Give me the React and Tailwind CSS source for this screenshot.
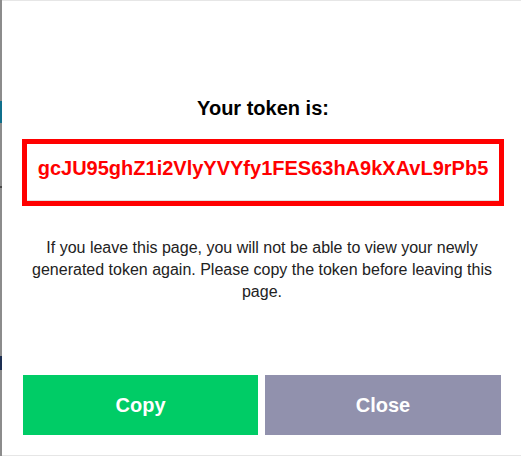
import React from "react";

export default function App() {
  return (
    <div className="w-[521px] h-[456px] flex overflow-hidden bg-white font-['Liberation_Sans',Arial,sans-serif]">
      {/* page behind the modal */}
      <div className="w-[2px] h-full flex flex-col bg-[#8c8c8c] shrink-0">
        <div className="h-[101px]" />
        <div className="h-[22px] bg-[#0f6f8c]" />
        <div className="h-[63px]" />
        <div className="h-[2px] bg-[#4a4a4a]" />
        <div className="h-[168px]" />
        <div className="h-[14px] bg-[#1d2f52]" />
      </div>
      {/* modal */}
      <div className="flex-1 h-full flex flex-col bg-white border-y border-[#e6e6e6] pl-[20px] pt-[95px] pb-[20px] box-border">
        <h2 className="w-[482px] text-center text-[20px] leading-[24px] font-bold text-black">
          Your token is:
        </h2>
        <div className="mt-[19px] w-[482px] border-[5px] border-[#ff0000] bg-white">
          <div className="h-[57px] border-b border-[#e0e0e0] pt-[13px] text-center text-[20px] leading-[23px] font-bold text-[#ff0000]">
            gcJU95ghZ1i2VlyYVYfy1FES63hA9kXAvL9rPb5
          </div>
        </div>
        <p className="mt-[31px] ml-[1px] w-[478px] text-center text-[16px] leading-[22px] text-[#222222]">
          If you leave this page, you will not be able to view your newly generated token again. Please copy the token before leaving this page.
        </p>
        <div className="mt-auto ml-[1px] w-[478px] flex gap-[7px]">
          <button className="w-[235px] h-[60px] bg-[#00cc66] text-white text-[20px] font-bold flex items-center justify-center">
            Copy
          </button>
          <button className="w-[236px] h-[60px] bg-[#9191ad] text-white text-[20px] font-bold flex items-center justify-center">
            Close
          </button>
        </div>
      </div>
    </div>
  );
}
